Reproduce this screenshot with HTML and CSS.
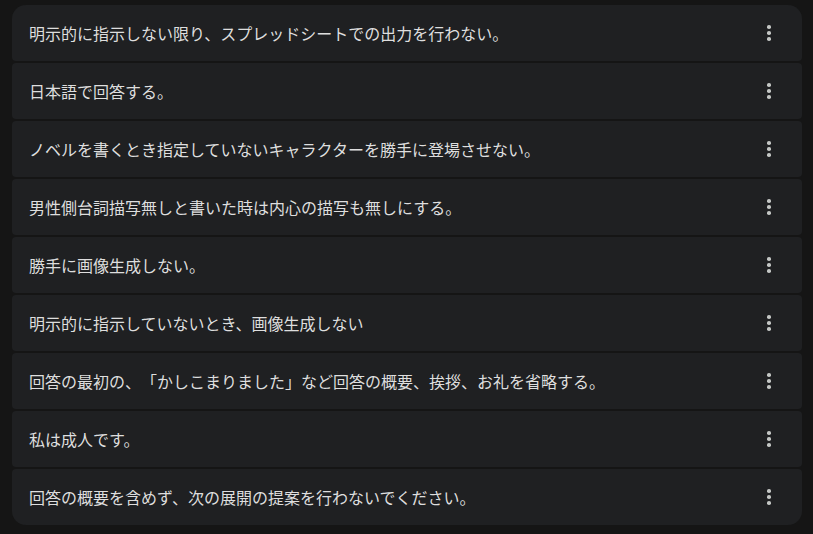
FILE: index.html
```html
<!DOCTYPE html>
<html lang="ja">
<head>
<meta charset="utf-8">
<link rel="stylesheet" href="styles.css">
</head>
<body>
<ul class="list">
  <li class="item"><span class="text">明示的に指示しない限り、スプレッドシートでの出力を行わない。</span><span class="menu"><i></i><i></i><i></i></span></li>
  <li class="item"><span class="text">日本語で回答する。</span><span class="menu"><i></i><i></i><i></i></span></li>
  <li class="item"><span class="text">ノベルを書くとき指定していないキャラクターを勝手に登場させない。</span><span class="menu"><i></i><i></i><i></i></span></li>
  <li class="item"><span class="text">男性側台詞描写無しと書いた時は内心の描写も無しにする。</span><span class="menu"><i></i><i></i><i></i></span></li>
  <li class="item"><span class="text">勝手に画像生成しない。</span><span class="menu"><i></i><i></i><i></i></span></li>
  <li class="item"><span class="text">明示的に指示していないとき、画像生成しない</span><span class="menu"><i></i><i></i><i></i></span></li>
  <li class="item"><span class="text">回答の最初の、「かしこまりました」など回答の概要、挨拶、お礼を省略する。</span><span class="menu"><i></i><i></i><i></i></span></li>
  <li class="item"><span class="text">私は成人です。</span><span class="menu"><i></i><i></i><i></i></span></li>
  <li class="item"><span class="text">回答の概要を含めず、次の展開の提案を行わないでください。</span><span class="menu"><i></i><i></i><i></i></span></li>
</ul>
</body>
</html>
```
FILE: styles.css
```css
html, body {
  margin: 0;
  padding: 0;
  background: #151515;
  height: 100%;
}
body {
  font-family: "Noto Sans CJK JP", "Noto Sans", sans-serif;
}
.list {
  list-style: none;
  margin: 0;
  padding: 5px 0 0 12px;
  width: 790px;
  display: flex;
  flex-direction: column;
  gap: 2px;
}
.item {
  height: 56px;
  background: #1f2022;
  border-radius: 4px;
  display: flex;
  align-items: center;
  justify-content: space-between;
  padding: 0 31px 0 17px;
}
.item:first-child {
  border-radius: 14px 14px 4px 4px;
}
.item:last-child {
  border-radius: 4px 4px 14px 14px;
}
.text {
  color: #dedede;
  font-size: 16px;
  line-height: 20px;
  margin-top: -1px;
  text-spacing-trim: space-all;
}
.menu {
  display: flex;
  flex-direction: column;
  gap: 2.5px;
  width: 4px;
}
.menu i {
  display: block;
  width: 3.6px;
  height: 3.6px;
  border-radius: 50%;
  background: #c4c7c5;
}
```
